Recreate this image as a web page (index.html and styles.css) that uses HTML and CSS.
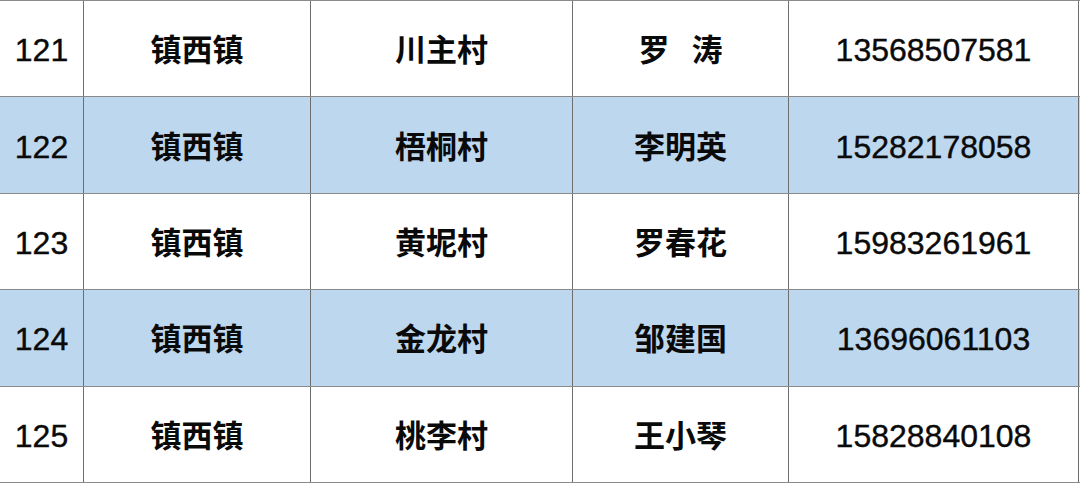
FILE: index.html
```html
<!DOCTYPE html>
<html lang="zh">
<head>
<meta charset="utf-8">
<link rel="stylesheet" href="styles.css">
</head>
<body>
<div class="table">
  <div class="row">
    <div class="cell num">121</div><div class="cell zh">镇西镇</div><div class="cell zh">川主村</div><div class="cell zh"><span>罗</span><span class="gap"></span><span>涛</span></div><div class="cell num">13568507581</div>
  </div>
  <div class="row alt">
    <div class="cell num">122</div><div class="cell zh">镇西镇</div><div class="cell zh">梧桐村</div><div class="cell zh">李明英</div><div class="cell num">15282178058</div>
  </div>
  <div class="row">
    <div class="cell num">123</div><div class="cell zh">镇西镇</div><div class="cell zh">黄坭村</div><div class="cell zh">罗春花</div><div class="cell num">15983261961</div>
  </div>
  <div class="row alt">
    <div class="cell num">124</div><div class="cell zh">镇西镇</div><div class="cell zh">金龙村</div><div class="cell zh">邹建国</div><div class="cell num">13696061103</div>
  </div>
  <div class="row">
    <div class="cell num">125</div><div class="cell zh">镇西镇</div><div class="cell zh">桃李村</div><div class="cell zh">王小琴</div><div class="cell num">15828840108</div>
  </div>
</div>
</body>
</html>
```
FILE: styles.css
```css
html, body {
  margin: 0;
  padding: 0;
  background: #ffffff;
}
.table {
  width: 1080px;
  height: 483px;
  border-top: 1px solid #8a8a8a;
  box-sizing: border-box;
  overflow: hidden;
}
.row {
  display: grid;
  grid-template-columns: 84px 227px 262px 216px 290px;
  height: 96.4px;
  box-sizing: border-box;
  border-bottom: 1px solid #8a8a8a;
  background: #ffffff;
}
.row.alt {
  background: #bdd7ee;
}
.cell {
  border-right: 1px solid #6e6e6e;
  display: flex;
  align-items: center;
  justify-content: center;
  color: #0a0a0a;
}
.num {
  font-family: "Liberation Sans", Arial, sans-serif;
  font-size: 32px;
  padding-top: 4px;
  -webkit-text-stroke: 0.4px #0a0a0a;
}
.zh {
  font-family: "Noto Sans CJK SC", sans-serif;
  font-weight: 700;
  font-size: 31px;
  padding-bottom: 2px;
}
.gap {
  display: inline-block;
  width: 22px;
}
```
